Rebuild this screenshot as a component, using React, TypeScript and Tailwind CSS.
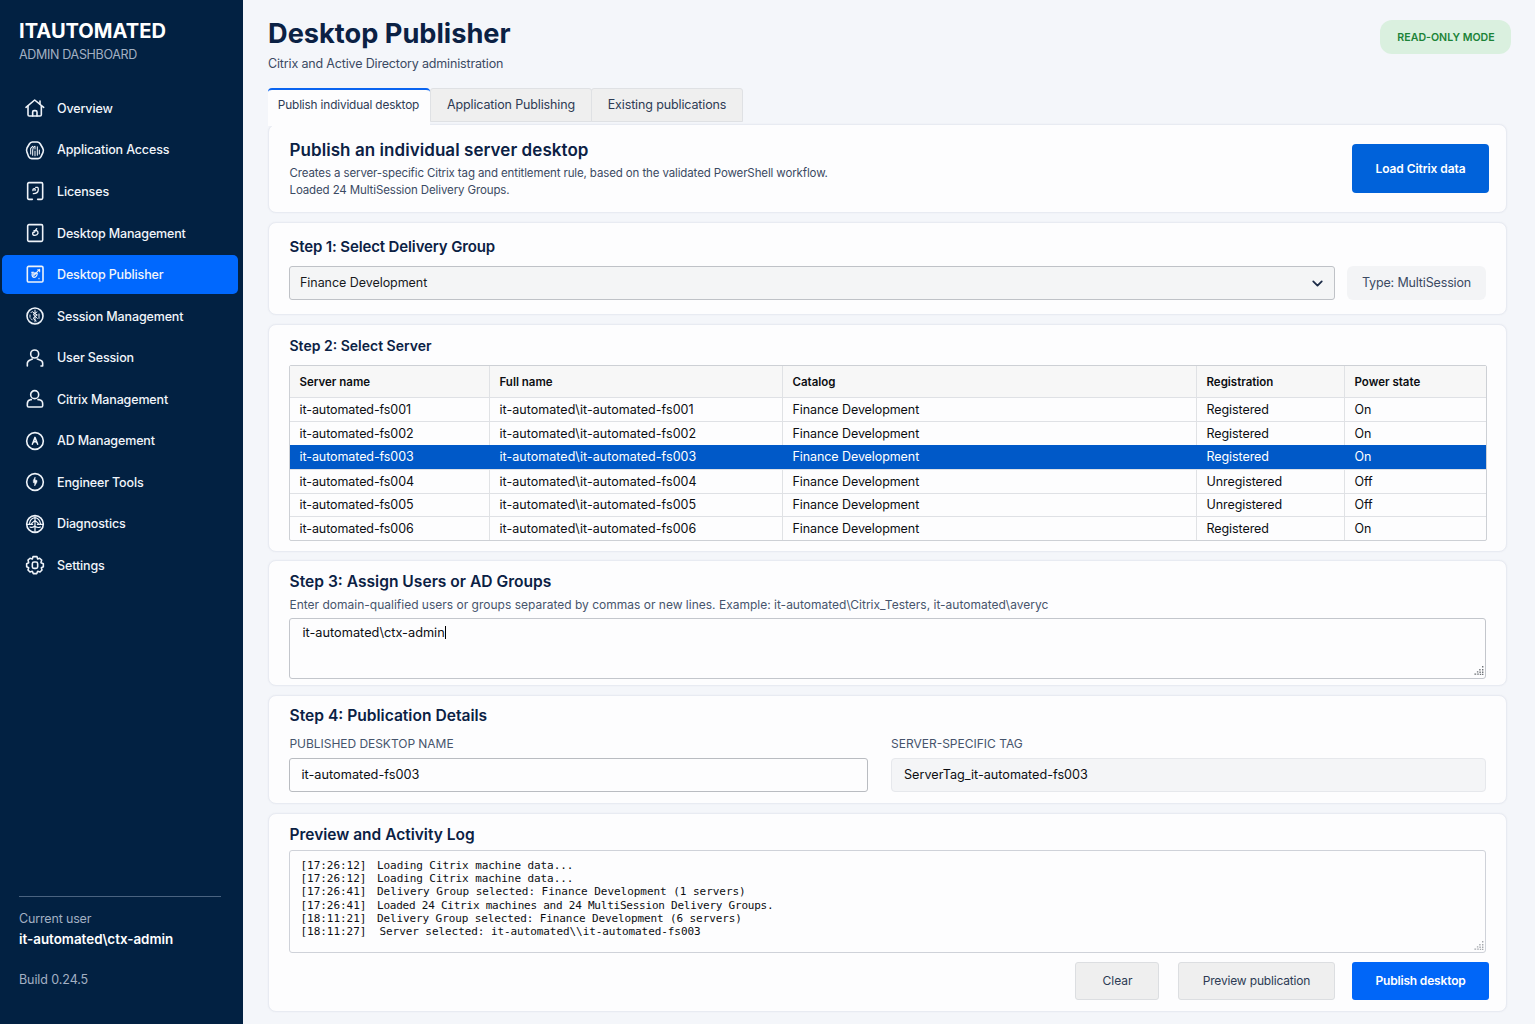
import type { ReactNode } from "react";
import { ChevronDown } from "lucide-react";

const icons: Record<string, ReactNode> = {
  home: (
    <>
      <path d="M3 28 L29 6 L56 28" />
      <path d="M9 24 V50 Q9 54 13 54 H45 Q49 54 49 50 V24" />
      <path d="M23 54 V42 Q23 38 27 38 H31 Q36 38 36 42 V54" />
      <path d="M45 17 V9" />
    </>
  ),
  access: (
    <>
      <path d="M22 6 H37 Q43 7 46 12 L53 24 Q57 31 54 37 L48 50 Q45 56 39 56 H20 Q14 56 11 50 L6 37 Q3 31 6 24 L13 12 Q16 7 22 6 Z" />
      <path d="M17 42 V25 M23 46 V32 Q24 20 30 19 V27 M30 33 V47 M37 20 V46 M43 30 V42 M17 25 L23 19" strokeWidth={3.2} />
    </>
  ),
  license: (
    <>
      <path d="M22 55 H12 Q8 55 8 51 V9 Q8 5 12 5 H49 Q53 5 53 9 V51 Q53 55 49 55 H38" />
      <path d="M24 29 Q23 23 28 23 Q32 24 30 28 M32 19 H38 Q40 20 40 26 Q39 38 25 38" strokeWidth={4} />
    </>
  ),
  desktop: (
    <>
      <rect x="8" y="5" width="45" height="50" rx="4" />
      <path d="M27 23 H35 Q40 26 39 31 Q37 37 30 37 Q23 37 23 32 Q23 27 29 27 M30 24 L35 17" strokeWidth={4} />
    </>
  ),
  publisher: (
    <>
      <rect x="7" y="7" width="47" height="47" rx="4" />
      <path d="M22 26 Q19 37 25 40 Q35 41 37 28 Q30 23 25 31 M26 35 L34 27 M35 25 L44 16 M38 17 H44 V23 M42 43 V44 M20 25 H26" strokeWidth={3.2} />
    </>
  ),
  session: (
    <>
      <circle cx="30" cy="30" r="24" />
      <path d="M30 12 V48 M23 18 L37 27 L24 37 L34 45 M36 18 L24 25 L37 37 M15 27 V34 M18 38 L22 42 M18 20 L21 17 M42 24 V37" strokeWidth={3} />
    </>
  ),
  user: (
    <>
      <circle cx="29" cy="18" r="12" />
      <path d="M7 54 V46 Q7 38 17 35 L22 33 M37 33 L43 35 Q53 38 53 45 V54 M48 54 H53" />
    </>
  ),
  citrix: (
    <>
      <circle cx="29" cy="17" r="12" />
      <path d="M19 32 H16 Q7 34 7 44 V50 Q7 54 11 54 H49 Q53 54 53 50 V44 Q53 34 43 32 H39" />
    </>
  ),
  ad: (
    <>
      <circle cx="30" cy="30" r="25" />
      <path d="M22 40 L30 19 L38 40 M25 34 L30 31 L35 34" strokeWidth={4.4} />
    </>
  ),
  tools: (
    <>
      <circle cx="30" cy="30" r="25" />
      <path d="M30 16 L25 25 V32 H29 V42 L36 30 V25 H31 Z" fill="currentColor" strokeWidth={1.5} />
    </>
  ),
  diagnostics: (
    <>
      <circle cx="30" cy="30" r="25" />
      <path d="M30 8 V54 M13 31 Q15 13 30 11 Q44 13 47 31 M7 31 H23 M37 31 H54 M20 28 L30 19 L40 28 M15 39 Q22 43 29 36 Q38 43 46 39" strokeWidth={3.6} />
    </>
  ),
  settings: (
    <>
      <path d="M24 5 H36 L38 12 L44 10 L50 15 L48 23 L55 26 V35 L49 38 L51 45 L45 51 L38 49 L35 56 H25 L22 49 L15 51 L9 45 L11 38 L5 35 V26 L11 23 L9 15 L15 10 L22 12 Z" />
      <rect x="22" y="21" width="16" height="19" rx="5" />
    </>
  ),
};

const nav = [
  ["home", "Overview"],
  ["access", "Application Access"],
  ["license", "Licenses"],
  ["desktop", "Desktop Management"],
  ["publisher", "Desktop Publisher"],
  ["session", "Session Management"],
  ["user", "User Session"],
  ["citrix", "Citrix Management"],
  ["ad", "AD Management"],
  ["tools", "Engineer Tools"],
  ["diagnostics", "Diagnostics"],
  ["settings", "Settings"],
];

const servers = [
  ["001", "Registered", "On"],
  ["002", "Registered", "On"],
  ["003", "Registered", "On"],
  ["004", "Unregistered", "Off"],
  ["005", "Unregistered", "Off"],
  ["006", "Registered", "On"],
];

const log = [
  ["[17:26:12]", "Loading Citrix machine data...", "tracking-[-0.08px]"],
  ["[17:26:12]", "Loading Citrix machine data...", "tracking-[-0.08px]"],
  ["[17:26:41]", "Delivery Group selected: Finance Development (1 servers)", "tracking-[-0.04px]"],
  ["[17:26:41]", "Loaded 24 Citrix machines and 24 MultiSession Delivery Groups.", "tracking-[-0.23px]"],
  ["[18:11:21]", "Delivery Group selected: Finance Development (6 servers)", "tracking-[-0.11px]"],
  ["[18:11:27]", "Server selected: it-automated\\\\it-automated-fs003", "ml-[2.5px] tracking-[-0.07px]"],
];

function Grip({ className }: { className: string }) {
  return (
    <svg viewBox="0 0 10 10" className={`absolute size-[10px] ${className}`} fill="currentColor">
      <path d="M8 0h1.4v1.4H8zM5.2 3h1.4v1.4H5.2zM8 3h1.4v1.4H8zM2.9 5.2h1.4v1.4H2.9zM5.4 5.6h1.4V7H5.4zM8 5.6h1.4V7H8zM.4 7.6h1.8v1.2H.4zM3.2 7.6h1.6v1.2H3.2zM5.8 7.8h1.4V9H5.8zM8 7.8h1.4V9H8z" />
    </svg>
  );
}

const card = "rounded-[8px] border border-[#e8ebf2] bg-[#fdfdfe] shadow-[0_0_2px_rgba(30,50,90,0.05)]";

export default function App() {
  return (
    <div className="flex h-[1024px] w-[1535px] overflow-hidden bg-[#f4f6fa] font-[Inter,sans-serif] text-[12.5px] text-[#0c0e12]">
      <aside className="flex w-[243px] shrink-0 flex-col bg-[#022142] text-white">
        <div className="h-[87.5px] pl-[19px] pt-[18px]">
          <div className="text-[20.1px] font-bold leading-[26px]">ITAUTOMATED</div>
          <div className="mt-[2px] leading-[18px] tracking-[-0.32px] text-[#a3b0c2]">ADMIN DASHBOARD</div>
        </div>
        <nav className="flex flex-col">
          {nav.map(([icon, label]) => (
            <div key={label} className="flex h-[41.56px] items-center pl-[2px]">
              <div className={`flex h-[39px] w-[236px] items-center rounded-[5px] pl-[23px] ${icon === "publisher" ? "bg-[#0068fe]" : ""}`}>
                <svg viewBox="0 0 60 60" className="size-5 text-[#eef3f9]" fill="none" stroke="currentColor" strokeWidth={4.8} strokeLinecap="round" strokeLinejoin="round">
                  {icons[icon]}
                </svg>
                <span className="ml-3 mt-[2px] font-medium tracking-[-0.14px] text-[#f1f5fa]">{label}</span>
              </div>
            </div>
          ))}
        </nav>
        <div className="ml-[19px] mr-[22px] mt-auto h-[128px] border-t border-[#4a6380] pt-[12px]">
          <div className="leading-[20px] tracking-[-0.16px] text-[#a3b0c2]">Current user</div>
          <div className="text-[13.4px] font-semibold leading-[20px]">it-automated\ctx-admin</div>
          <div className="mt-[21px] leading-[20px] tracking-[-0.08px] text-[#a3b0c2]">Build 0.24.5</div>
        </div>
      </aside>

      <main className="flex flex-1 flex-col pl-[25px]">
        <header className="flex h-[88px] justify-between pr-[24px]">
          <div className="pt-[15px]">
            <h1 className="text-[27.2px] font-bold leading-[37px] text-[#0b2144]">Desktop Publisher</h1>
            <p className="mt-[3px] leading-[18px] tracking-[-0.16px] text-[#3b4a63]">Citrix and Active Directory administration</p>
          </div>
          <div className="mt-[20px] flex h-[34px] w-[131px] items-center justify-center rounded-[12px] bg-[#daf0df] pl-px pt-[2px] text-[10.6px] font-semibold text-[#1c8338]">READ-ONLY MODE</div>
        </header>

        <div className="z-10 flex h-[36px] items-start tracking-[-0.13px] text-[#2d3b54]">
          <div className="flex h-[38px] w-[162px] justify-center rounded-t-[4px] border-t-2 border-[#0a64f0] bg-[#fdfdfe] pr-px pt-[5px] text-[11.8px] leading-[20px] tracking-[-0.15px]">Publish individual desktop</div>
          <div className="flex h-[34px] w-[162px] items-center justify-center rounded-t-[3px] border border-[#dfe1e4] bg-[#efefef]">Application Publishing</div>
          <div className="-ml-px flex h-[34px] w-[152px] items-center justify-center rounded-t-[3px] border border-[#dfe1e4] bg-[#efefef]">Existing publications</div>
        </div>

        <div className="w-[1239px]">
          <section className={`flex h-[89px] justify-between pl-[20px] pr-[17px] ${card}`}>
            <div className="pl-[0.5px] pt-[14px]">
              <h2 className="text-[17px] font-semibold leading-[22px] tracking-[0.06px] text-[#0b2144]">Publish an individual server desktop</h2>
              <p className="mt-[4px] text-[11.5px] leading-[17.3px] tracking-[-0.12px] text-[#3b4a63]">
                Creates a server-specific Citrix tag and entitlement rule, based on the validated PowerShell workflow.
                <br />
                Loaded 24 MultiSession Delivery Groups.
              </p>
            </div>
            <button className="mt-[19px] h-[49px] w-[137px] rounded-[4px] bg-[#0062da] text-[12px] font-semibold tracking-[-0.08px] text-white">Load Citrix data</button>
          </section>

          <section className={`mt-[9px] h-[93px] px-[20px] pt-[14px] ${card}`}>
            <h2 className="pl-[0.5px] text-[15px] font-semibold leading-[20px] tracking-[-0.13px] text-[#0b2144]">Step 1: Select Delivery Group</h2>
            <div className="mt-[9px] flex gap-[12px]">
              <div className="flex h-[34px] w-[1046px] items-center justify-between rounded-[3px] border border-[#bfc2c7] bg-[#f4f5f6] pl-[10px] pr-[8px] text-[#17191d]">
                <span className="mt-px tracking-[-0.05px]">Finance Development</span>
                <ChevronDown className="size-[17px] text-[#1c2b47]" strokeWidth={2.5} />
              </div>
              <div className="flex h-[34px] w-[139px] items-center justify-center rounded-[6px] bg-[#f3f4f6] pt-px tracking-[-0.15px] text-[#3b4a63]">Type: MultiSession</div>
            </div>
          </section>

          <section className={`mt-[9px] h-[228px] px-[20px] pt-[11px] ${card}`}>
            <h2 className="pl-[0.5px] text-[14px] font-semibold leading-[19px] text-[#0b2144]">Step 2: Select Server</h2>
            <div className="mt-[10px] w-[1198px] rounded-[2px] border border-[#cdd0d5]">
              <div className="grid h-[31.4px] grid-cols-[200px_293px_414px_148px_1fr] bg-[#f7f7f7] text-[11.5px] font-semibold">
                {["Server name", "Full name", "Catalog", "Registration", "Power state"].map((h) => (
                  <div key={h} className="flex items-center border-r border-[#e0e2e5] pl-[9.5px] pt-px last:border-r-0">{h}</div>
                ))}
              </div>
              {servers.map(([n, reg, power]) => (
                <div key={n} className={`grid h-[23.8px] grid-cols-[200px_293px_414px_148px_1fr] tracking-[-0.08px] ${n === "003" ? "bg-[#0059c8] text-white" : "border-t border-[#dfe1e5]"}`}>
                  {[`it-automated-fs${n}`, `it-automated\\it-automated-fs${n}`, "Finance Development", reg, power].map((c, i) => (
                    <div key={i} className={`flex items-center border-r pl-[9.5px] pt-[1.4px] last:border-r-0 ${i === 1 ? "tracking-[0.04px]" : ""} ${n === "003" ? "border-transparent" : "border-[#e0e2e5]"}`}>{c}</div>
                  ))}
                </div>
              ))}
            </div>
          </section>

          <section className={`mt-[8px] h-[126px] px-[20px] pt-[11px] ${card}`}>
            <h2 className="pl-[0.5px] text-[15.6px] font-semibold leading-[20px] text-[#0b2144]">Step 3: Assign Users or AD Groups</h2>
            <p className="mt-[4px] pl-[0.5px] text-[12px] leading-[18px] text-[#46546c]">Enter domain-qualified users or groups separated by commas or new lines. Example: it-automated\Citrix_Testers, it-automated\averyc</p>
            <div className="relative mt-[4px] flex h-[61px] w-[1197px] rounded-[3px] border border-[#c3c6cc] pl-[12.5px] pt-[4px] text-[12.75px] leading-[20px]">
              <span>it-automated\ctx-admin</span>
              <span className="mt-[3px] h-[13px] w-px bg-black" />
              <Grip className="bottom-[2px] right-[1px] text-[#6f7378]" />
            </div>
          </section>

          <section className={`mt-[9px] h-[109px] px-[20px] pt-[10px] ${card}`}>
            <h2 className="pl-[0.5px] text-[15.6px] font-semibold leading-[20px] text-[#0b2144]">Step 4: Publication Details</h2>
            <div className="mt-[9px] grid grid-cols-[579px_595px] gap-[23px]">
              <div>
                <div className="pl-[0.5px] text-[12px] leading-[18px] tracking-[-0.04px] text-[#46546c]">PUBLISHED DESKTOP NAME</div>
                <div className="mt-[5px] flex h-[34px] items-center rounded-[3px] border border-[#b9bcc1] pl-[11.5px] text-[12.75px]">it-automated-fs003</div>
              </div>
              <div>
                <div className="text-[12px] leading-[18px] text-[#46546c]">SERVER-SPECIFIC TAG</div>
                <div className="mt-[5px] flex h-[34px] items-center rounded-[4px] border border-[#e6e8ec] bg-[#f4f5f7] pl-[12px] text-[12.65px]">ServerTag_it-automated-fs003</div>
              </div>
            </div>
          </section>

          <section className={`mt-[9px] h-[199px] pl-[20px] pr-[17px] pt-[11px] ${card}`}>
            <h2 className="pl-[0.5px] text-[15.5px] font-semibold leading-[20px] text-[#0b2144]">Preview and Activity Log</h2>
            <div className="relative mt-[5px] h-[103px] w-[1197px] rounded-[3px] border border-[#cfd2d9] pl-[10.5px] pt-[8px] font-['DejaVu_Sans_Mono',monospace] text-[11px] leading-[13.2px]">
              {log.map(([time, message, spacing], i) => (
                <div key={i} className="flex whitespace-pre">
                  <span className="w-[76.5px] tracking-[-0.04px]">{time}</span>
                  <span className={spacing}>{message}</span>
                </div>
              ))}
              <Grip className="bottom-[1px] right-[1px] text-[#a5a8ad]" />
            </div>
            <div className="mt-[9px] flex justify-end text-[12px] tracking-[-0.17px]">
              <button className="h-[38px] w-[84px] rounded-[3px] border border-[#dcdee1] bg-[#efefef] pl-px tracking-normal text-[#2d3b54]">Clear</button>
              <button className="ml-[19px] h-[38px] w-[157px] rounded-[3px] border border-[#dcdee1] bg-[#efefef] text-[#2d3b54]">Preview publication</button>
              <button className="ml-[17px] h-[38px] w-[137px] rounded-[3px] bg-[#0066f8] font-semibold text-white">Publish desktop</button>
            </div>
          </section>
        </div>
      </main>
    </div>
  );
}
